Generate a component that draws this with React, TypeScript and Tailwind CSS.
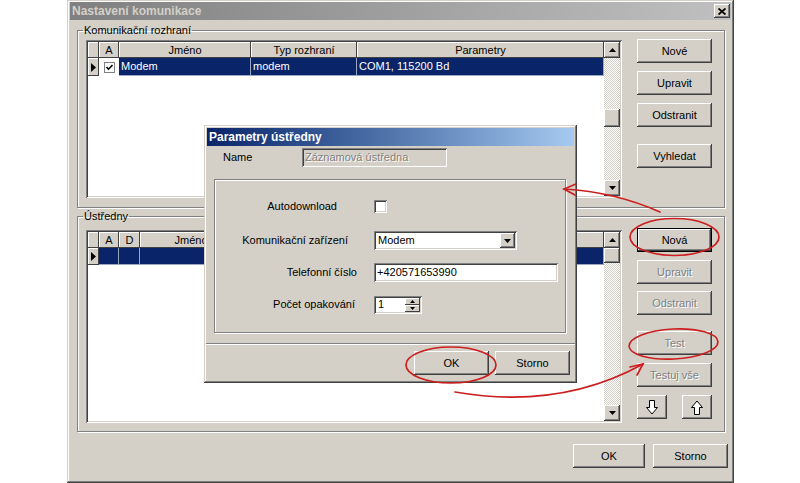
import React from "react";

const raised =
  "shadow-[inset_-1px_-1px_#404040,inset_1px_1px_#ffffff,inset_-2px_-2px_#808080,inset_2px_2px_#d4d0c8]";
const sunken =
  "shadow-[inset_1px_1px_#808080,inset_-1px_-1px_#ffffff,inset_2px_2px_#404040,inset_-2px_-2px_#d4d0c8]";
const thin = "shadow-[inset_-1px_-1px_#404040,inset_1px_1px_#ffffff]";
const etched = "border border-[#808080] shadow-[1px_1px_0_#ffffff,inset_1px_1px_0_#ffffff]";
const dither =
  "bg-[image:repeating-conic-gradient(#ffffff_0_25%,#d4d0c8_0_50%)] bg-[length:2px_2px]";
const greyText = "text-[#808080] [text-shadow:1px_1px_0_#ffffff]";

const TriUp = () => (
  <svg width="7" height="4" viewBox="0 0 7 4">
    <path d="M3.5 0L7 4H0z" fill="#000" />
  </svg>
);
const TriDown = () => (
  <svg width="7" height="4" viewBox="0 0 7 4">
    <path d="M0 0H7L3.5 4z" fill="#000" />
  </svg>
);
const TriRight = () => (
  <svg width="5" height="9" viewBox="0 0 5 9">
    <path d="M0 0L5 4.5L0 9z" fill="#000" />
  </svg>
);

function Btn({
  label,
  w = "w-[75px]",
  disabled,
  focused,
  children,
}: {
  label?: string;
  w?: string;
  disabled?: boolean;
  focused?: boolean;
  children?: React.ReactNode;
}) {
  return (
    <div
      className={`${w} h-[24px] shrink-0 flex items-center justify-center bg-[#d4d0c8] ${
        focused ? "border border-black" : ""
      } ${raised} ${disabled ? greyText : ""}`}
    >
      {children ?? label}
    </div>
  );
}

function ScrollBar({ thumb }: { thumb: string }) {
  return (
    <div className={`w-[16px] flex flex-col ${dither}`}>
      <div className={`h-[16px] shrink-0 bg-[#d4d0c8] flex items-center justify-center ${raised}`}>
        <TriUp />
      </div>
      <div className="flex-1">
        <div className={`w-[16px] bg-[#d4d0c8] ${raised} ${thumb}`} />
      </div>
      <div className={`h-[16px] shrink-0 bg-[#d4d0c8] flex items-center justify-center ${raised}`}>
        <TriDown />
      </div>
    </div>
  );
}

function HeadCell({ w, children }: { w: string; children?: React.ReactNode }) {
  return (
    <div className={`${w} h-full flex items-center justify-center bg-[#d4d0c8] ${thin}`}>{children}</div>
  );
}

function SelCell({ w, children }: { w: string; children?: React.ReactNode }) {
  return (
    <div className={`${w} h-full flex items-center pl-[2px] bg-[#0a246a] text-white border-r border-b border-[#9aa6c4] whitespace-nowrap overflow-hidden`}>
      {children}
    </div>
  );
}

function ArrowIcon({ down }: { down?: boolean }) {
  return (
    <svg width="14" height="17" viewBox="0 0 14 17">
      <path
        d={down ? "M4.5 1.5H9.5V8.5H12.5L7 15L1.5 8.5H4.5Z" : "M4.5 15.5H9.5V8.5H12.5L7 2L1.5 8.5H4.5Z"}
        fill="#ffffff"
        stroke="#000"
        strokeWidth="1"
      />
    </svg>
  );
}

export default function App() {
  return (
    <div className="relative w-[800px] h-[483px] overflow-hidden bg-white font-['Liberation_Sans',Arial,sans-serif] text-[11px] leading-[13px] text-black">
      {/* main window */}
      <div className="ml-[67px] w-[667px] h-[483px] bg-[#d4d0c8] flex flex-col px-[3px] pt-[2px] shadow-[inset_-1px_-1px_#404040,inset_1px_1px_#d4d0c8,inset_-2px_-2px_#808080,inset_2px_2px_#ffffff]">
        <div className="h-[18px] shrink-0 flex items-center justify-between bg-linear-to-r from-[#808080] to-[#c0c0c0] pl-[2px] pr-[1px]">
          <span className="font-bold text-[12px] text-[#d4d0c8]">Nastavení komunikace</span>
          <div className={`w-[16px] h-[14px] bg-[#d4d0c8] flex items-center justify-center ${raised}`}>
            <svg width="8" height="7" viewBox="0 0 8 7">
              <path d="M0.5 0.5L7.5 6.5M7.5 0.5L0.5 6.5" stroke="#000" strokeWidth="1.8" />
            </svg>
          </div>
        </div>

        <div className="pl-[7px] pr-[6px] mt-[4px]">
          <fieldset className={`${etched} p-0`}>
            <legend className="ml-[5px] px-[1px]">Komunikační rozhraní</legend>
            <div className="flex items-start pl-[8px] pr-[12px] pt-[2px] pb-[9px]">
              <div className={`mt-[1px] w-[536px] h-[158px] p-[2px] bg-white flex ${sunken}`}>
                <div className="flex-1 flex flex-col">
                  <div className="h-[16px] flex">
                    <HeadCell w="w-[11px]" />
                    <HeadCell w="w-[20px]">A</HeadCell>
                    <HeadCell w="w-[132px]">Jméno</HeadCell>
                    <HeadCell w="w-[106px]">Typ rozhraní</HeadCell>
                    <HeadCell w="flex-1">Parametry</HeadCell>
                  </div>
                  <div className="h-[18px] flex">
                    <div className={`w-[11px] h-full flex items-center justify-center bg-[#d4d0c8] ${thin}`}>
                      <TriRight />
                    </div>
                    <div className="w-[20px] h-full flex items-center justify-center bg-white">
                      <svg width="11" height="11" viewBox="0 0 11 11">
                        <rect x="0.5" y="0.5" width="10" height="10" fill="#fff" stroke="#808080" />
                        <path d="M2.5 5L4.5 7.2L8.5 3" fill="none" stroke="#000" strokeWidth="1.6" />
                      </svg>
                    </div>
                    <SelCell w="w-[132px]">Modem</SelCell>
                    <SelCell w="w-[106px]">modem</SelCell>
                    <SelCell w="flex-1">COM1, 115200 Bd</SelCell>
                  </div>
                </div>
                <ScrollBar thumb="mt-[51px] h-[18px]" />
              </div>
              <div className="ml-[15px] flex flex-col">
                <Btn label="Nové" />
                <div className="mt-[8px]">
                  <Btn label="Upravit" />
                </div>
                <div className="mt-[8px]">
                  <Btn label="Odstranit" />
                </div>
                <div className="mt-[17px]">
                  <Btn label="Vyhledat" />
                </div>
              </div>
            </div>
          </fieldset>

          <fieldset className={`${etched} p-0 mt-[2px]`}>
            <legend className="ml-[5px] px-[1px]">Ústředny</legend>
            <div className="flex items-start pl-[8px] pr-[12px] pt-[5px] pb-[8px]">
              <div className={`mt-[2px] w-[536px] h-[193px] p-[2px] bg-white flex ${sunken}`}>
                <div className="flex-1 flex flex-col">
                  <div className="h-[16px] flex">
                    <HeadCell w="w-[11px]" />
                    <HeadCell w="w-[20px]">A</HeadCell>
                    <HeadCell w="w-[21px]">D</HeadCell>
                    <HeadCell w="w-[102px]">Jméno</HeadCell>
                    <HeadCell w="w-[106px]" />
                    <HeadCell w="flex-1" />
                  </div>
                  <div className="h-[17px] flex">
                    <div className={`w-[11px] h-full flex items-center justify-center bg-[#d4d0c8] ${thin}`}>
                      <TriRight />
                    </div>
                    <SelCell w="w-[20px]" />
                    <SelCell w="w-[21px]" />
                    <SelCell w="w-[102px]" />
                    <SelCell w="w-[106px]" />
                    <SelCell w="flex-1" />
                  </div>
                </div>
                <ScrollBar thumb="mt-0 h-[15px]" />
              </div>
              <div className="ml-[15px] flex flex-col">
                <Btn label="Nová" focused />
                <div className="mt-[8px]">
                  <Btn label="Upravit" disabled />
                </div>
                <div className="mt-[7px]">
                  <Btn label="Odstranit" disabled />
                </div>
                <div className="mt-[16px]">
                  <Btn label="Test" disabled />
                </div>
                <div className="mt-[8px]">
                  <Btn label="Testuj vše" disabled />
                </div>
                <div className="mt-[8px] flex justify-between">
                  <Btn w="w-[30px]">
                    <ArrowIcon down />
                  </Btn>
                  <Btn w="w-[30px]">
                    <ArrowIcon />
                  </Btn>
                </div>
              </div>
            </div>
          </fieldset>
        </div>

        <div className="mt-[12px] flex justify-end gap-[8px] pr-[3px]">
          <Btn label="OK" w="w-[72px]" />
          <Btn label="Storno" w="w-[75px]" />
        </div>
      </div>

      {/* modal dialog */}
      <div className="absolute left-[204px] top-[125px] w-[373px] h-[258px] bg-[#d4d0c8] p-[3px] flex flex-col shadow-[inset_-1px_-1px_#404040,inset_1px_1px_#d4d0c8,inset_-2px_-2px_#808080,inset_2px_2px_#ffffff]">
        <div className="h-[18px] shrink-0 flex items-center bg-linear-to-r from-[#0a246a] to-[#a6caf0] pl-[2px]">
          <span className="font-bold text-[12px] text-white">Parametry ústředny</span>
        </div>
        <div className="mt-[2px] h-[19px] flex items-center">
          <div className="w-[95px] pl-[16px]">Name</div>
          <div className={`w-[145px] h-[19px] flex items-center pl-[3px] bg-[#d4d0c8] ${sunken} ${greyText}`}>
            Záznamová ústředna
          </div>
        </div>
        <div className={`ml-[7px] mt-[12px] w-[352px] h-[154px] ${etched} pt-[17px]`}>
          <div className="h-[19px] flex items-center">
            <div className="w-[159px] pr-[37px] text-right">Autodownload</div>
            <div className={`w-[13px] h-[13px] bg-white ${sunken}`} />
          </div>
          <div className="mt-[15px] h-[19px] flex items-center">
            <div className="w-[159px] pr-[26px] text-right">Komunikační zařízení</div>
            <div className={`w-[143px] h-[19px] bg-white flex items-center p-[2px] ${sunken}`}>
              <span className="flex-1 pl-[2px]">Modem</span>
              <div className={`w-[15px] h-[15px] bg-[#d4d0c8] flex items-center justify-center ${raised}`}>
                <TriDown />
              </div>
            </div>
          </div>
          <div className="mt-[13px] h-[19px] flex items-center">
            <div className="w-[159px] pr-[17px] text-right">Telefonní číslo</div>
            <div className={`w-[184px] h-[19px] bg-white flex items-center pl-[3px] ${sunken}`}>+420571653990</div>
          </div>
          <div className="mt-[13px] h-[19px] flex items-center">
            <div className="w-[159px] pr-[19px] text-right">Počet opakování</div>
            <div className={`w-[48px] h-[18px] bg-white flex items-center p-[2px] ${sunken}`}>
              <span className="flex-1 pl-[2px]">1</span>
              <div className="w-[15px] h-[14px] flex flex-col">
                <div className={`h-[7px] bg-[#d4d0c8] flex items-center justify-center ${thin}`}>
                  <svg width="5" height="3" viewBox="0 0 5 3">
                    <path d="M2.5 0L5 3H0z" fill="#000" />
                  </svg>
                </div>
                <div className={`h-[7px] bg-[#d4d0c8] flex items-center justify-center ${thin}`}>
                  <svg width="5" height="3" viewBox="0 0 5 3">
                    <path d="M0 0H5L2.5 3z" fill="#000" />
                  </svg>
                </div>
              </div>
            </div>
          </div>
        </div>
        <div className="mt-[10px] -mx-[1px] border-t border-[#808080] border-b border-b-white" />
        <div className="mt-[6px] flex justify-end gap-[6px] pr-[4px]">
          <Btn label="OK" />
          <Btn label="Storno" />
        </div>
      </div>

      {/* red annotations */}
      <svg className="absolute inset-0 pointer-events-none" width="800" height="483" viewBox="0 0 800 483">
        <g fill="none" stroke="#cc1f1f" strokeWidth="1.7" strokeLinecap="round">
          <ellipse cx="674.5" cy="237" rx="44.5" ry="18.5" />
          <ellipse cx="451" cy="365" rx="45" ry="18" />
          <ellipse cx="673.5" cy="344" rx="44.5" ry="15" transform="rotate(-3 673.5 344)" />
          <path d="M660 212Q615 192 564 189" />
          <path d="M576 184L564 189L575 195" />
          <path d="M455 392Q560 410 643 364" />
          <path d="M630 367L643 364L637 375" />
        </g>
      </svg>
    </div>
  );
}
